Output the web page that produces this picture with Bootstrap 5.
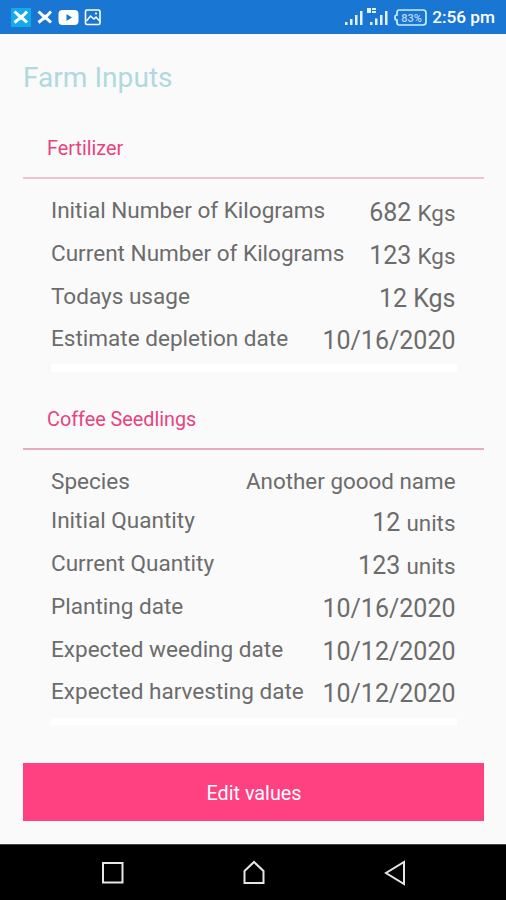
<!DOCTYPE html>
<html lang="en">
<head>
<meta charset="utf-8">
<meta name="viewport" content="width=device-width, initial-scale=1">
<title>Farm Inputs</title>
<link rel="stylesheet" href="https://cdn.jsdelivr.net/npm/bootstrap@5.3.0/dist/css/bootstrap.min.css">
<style>
body{font-family:Roboto,"Liberation Sans",sans-serif;background:#fafafa;color:#6c6c6c;height:900px;overflow:hidden}
.status-bar{height:34px;background:#1976d2;padding:0 11px 0 11px}
.status-bar svg,.system-nav svg{display:block;flex:none}
.clock{font-size:17.2px;font-weight:500;line-height:34px}
.screen-title{font-size:28.1px;line-height:34px;color:#b0d9df;margin:27px 23px 0}
.group{margin:0 22px 0 23px}
.group-title{font-size:19.8px;line-height:24px;color:#e8437e;padding-left:24px;margin:0}
.group-fert{margin-top:42px}
.group-coffee{margin-top:36px}
.rule{height:2px;background:#ecc3ce;margin-top:16px}
.rule-thin{background:#e5adbd}
.entries{padding:19px 28.5px 0 28px}
.entry{height:42.8px;white-space:nowrap}
.entry-short{height:39px}
.entry-name{font-size:22.55px;line-height:25.4px}
.entry-value{font-size:25px;line-height:30.8px}
.unit{font-size:22.4px}
.value-small{font-size:22.4px;line-height:25px}
.strip{height:8px;background:#fff;margin:-5px 27px 0 28px}
.strip-low{height:7px;margin-top:-4px}
.btn-edit{--bs-btn-color:#fff;--bs-btn-bg:#ff4081;--bs-btn-hover-color:#fff;--bs-btn-hover-bg:#ef3575;height:58px;margin:38px 22px 0 23px;padding:8px 11px 4px 12px;font-size:19.8px}
.system-nav{height:56px;background:#000;border-top:1px solid #444;gap:115px;padding-left:2px}
</style>
</head>
<body class="d-flex flex-column">
<header class="status-bar d-flex align-items-center justify-content-between text-white">
  <svg width="92" height="34" viewBox="0 0 92 34" fill="none">
    <rect x="0" y="8" width="20" height="19" fill="#12a9ed"/>
    <g stroke="#fff" stroke-width="3"><path d="M3.500 11.500 8.500 16.200M16 11.500 11.500 16.200M3.500 22.500 8.500 18.300M16 22.500 11.500 18.300M8 15.500 12 19M12 15.500 8 19"/><path d="M27.500 11.500 32.500 16.200M40 11.500 35.500 16.200M27.500 22.500 32.500 18.300M40 22.500 35.500 18.300M32 15.500 36 19M36 15.500 32 19"/></g>
    <rect x="47.500" y="10" width="20" height="15" rx="4" fill="#fff"/><path d="M55.500 14v7l5.500-3.500z" fill="#1976d2"/>
    <rect x="74.500" y="10" width="14.500" height="14.500" rx="1.500" stroke="#fff" stroke-width="1.600"/><path d="m75.500 21 4-5 3.500 3 2-2 3.500 4" stroke="#fff" stroke-width="1.400"/><circle cx="85" cy="13.500" r="1.100" fill="#fff"/>
  </svg>
  <div class="d-flex align-items-center">
    <svg width="88" height="34" viewBox="0 0 88 34" fill="#e4f0fb">
      <path d="M1 22h2.500v3H1zM6 19h2.500v6H6zM11 15h2.500v10H11zM16 11h2.500v14H16zM26 22h2.500v3H26zM31 18.500h2.500V25H31zM36 15h2.500v10H36zM41 11h2.500v14H41z"/>
      <path d="M23 8h4v5h-4zM28 8h4v2h-4zM28 11h4v2h-4z"/>
      <path d="M55 10h24q3 0 3 3v9q0 3-3 3H55q-2 0-2-3v-2q-2 0-2-2v-1q0-2 2-2v-2q0-3 2-3z" fill="none" stroke="#c7f0f6" stroke-width="1.700"/>
      <text x="67.500" y="21.500" font-size="11" font-weight="500" text-anchor="middle" fill="#b9d8f4">83%</text>
    </svg>
    <span class="clock">2:56 pm</span>
  </div>
</header>
<main class="flex-grow-1 d-flex flex-column">
  <h1 class="screen-title fw-normal">Farm Inputs</h1>
  <section class="group group-fert">
    <h2 class="group-title fw-normal">Fertilizer</h2>
    <div class="rule"></div>
    <div class="entries">
      <div class="entry d-flex justify-content-between"><span class="entry-name">Initial Number of Kilograms</span><span class="entry-value">682 <span class="unit">Kgs</span></span></div>
      <div class="entry d-flex justify-content-between"><span class="entry-name">Current Number of Kilograms</span><span class="entry-value">123 <span class="unit">Kgs</span></span></div>
      <div class="entry d-flex justify-content-between"><span class="entry-name">Todays usage</span><span class="entry-value">12 Kgs</span></div>
      <div class="entry d-flex justify-content-between"><span class="entry-name">Estimate depletion date</span><span class="entry-value">10/16/2020</span></div>
    </div>
    <div class="strip"></div>
  </section>
  <section class="group group-coffee">
    <h2 class="group-title fw-normal">Coffee Seedlings</h2>
    <div class="rule rule-thin"></div>
    <div class="entries">
      <div class="entry entry-short d-flex justify-content-between"><span class="entry-name">Species</span><span class="value-small">Another goood name</span></div>
      <div class="entry d-flex justify-content-between"><span class="entry-name">Initial Quantity</span><span class="entry-value">12 <span class="unit">units</span></span></div>
      <div class="entry d-flex justify-content-between"><span class="entry-name">Current Quantity</span><span class="entry-value">123 <span class="unit">units</span></span></div>
      <div class="entry d-flex justify-content-between"><span class="entry-name">Planting date</span><span class="entry-value">10/16/2020</span></div>
      <div class="entry d-flex justify-content-between"><span class="entry-name">Expected weeding date</span><span class="entry-value">10/12/2020</span></div>
      <div class="entry d-flex justify-content-between"><span class="entry-name">Expected harvesting date</span><span class="entry-value">10/12/2020</span></div>
    </div>
    <div class="strip strip-low"></div>
  </section>
  <button type="button" class="btn btn-edit rounded-0 border-0">Edit values</button>
</main>
<nav class="system-nav d-flex justify-content-center align-items-center" aria-label="System">
  <svg width="26" height="28" viewBox="0 0 26 28" fill="none" stroke="#e6e6e6" stroke-width="2"><path d="M3 4h19.500v19.500H3z"/></svg>
  <svg width="26" height="28" viewBox="0 0 26 28" fill="none" stroke="#e6e6e6" stroke-width="2"><path d="M3.500 12 13 3l9.500 9v12h-19z"/></svg>
  <svg width="26" height="28" viewBox="0 0 26 28" fill="none" stroke="#e6e6e6" stroke-width="2"><path d="M22 3v22L4 14z"/></svg>
</nav>
<script src="https://cdn.jsdelivr.net/npm/bootstrap@5.3.0/dist/js/bootstrap.bundle.min.js"></script>
</body>
</html>
